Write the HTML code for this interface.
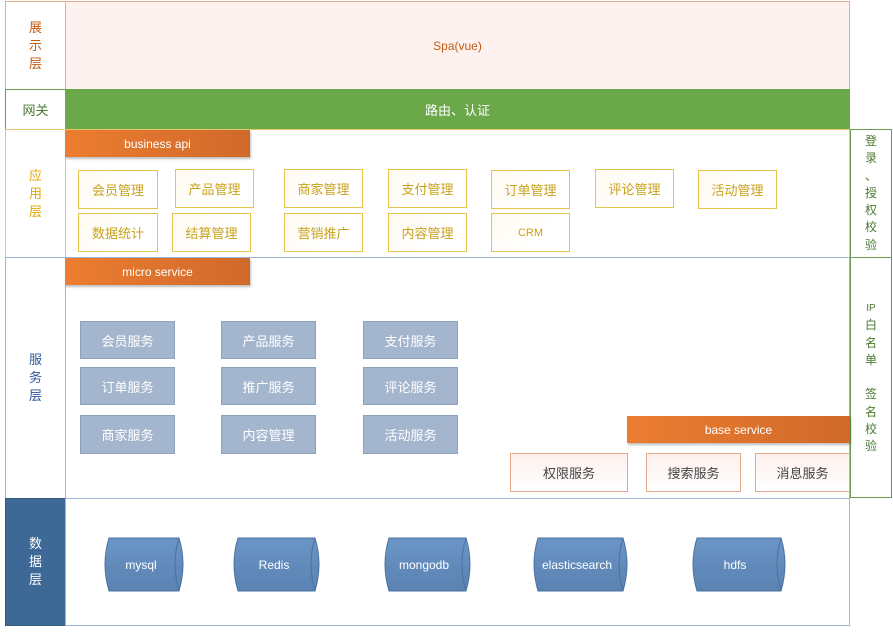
<!DOCTYPE html>
<html><head><meta charset="utf-8"><style>
*{margin:0;padding:0;box-sizing:border-box}
body{width:893px;height:633px;background:#fff;position:relative;font-family:"Liberation Sans","Noto Sans CJK SC",sans-serif;overflow:hidden}
div{position:absolute}
.c{display:flex;align-items:center;justify-content:center;text-align:center}
.lbl{font-size:13px;line-height:18px}
.ob{background:linear-gradient(90deg,#ec7d31,#d0692a);color:#fff;font-size:12px;box-shadow:1px 2px 2px rgba(0,0,0,.25)}
.y{border:1.5px solid #e6c54e;color:#c9a21a;font-size:13px;background:linear-gradient(135deg,#fffaf0,#fff 60%)}
.s{background:#a4b6cd;border:1px solid #8ca3c0;color:#fff;font-size:13px}
.b{border:1.5px solid #e5a88a;color:#444;font-size:13px;background:linear-gradient(180deg,#fdf0ec,#fff)}
.rc{text-align:center;color:#4a7a30;font-size:12px;line-height:17.3px}
</style></head><body>
<!-- row1 -->
<div class="c lbl" style="left:5px;top:1px;width:61px;height:89px;border:1px solid #e8a98c;color:#c55a11">展<br>示<br>层</div>
<div class="c" style="left:65px;top:1px;width:785px;height:89px;border:1px solid #e8a98c;background:#fdf2ef;color:#c55a11;font-size:12px">Spa(vue)</div>
<!-- row2 -->
<div class="c" style="left:5px;top:89px;width:61px;height:41px;border:1px solid #6a9a4f;color:#4a7a30;font-size:13px">网关</div>
<div class="c" style="left:65px;top:89px;width:785px;height:40px;background:#6aa84a;color:#fff;font-size:13px">路由、认证</div>
<!-- row3 -->
<div class="c lbl" style="left:5px;top:129px;width:61px;height:129px;border:1px solid #e6c86a;color:#e0a800">应<br>用<br>层</div>
<div style="left:65px;top:129px;width:785px;height:129px;border:1px solid #e6c86a"></div>
<div class="c ob" style="left:65px;top:130px;width:185px;height:27px">business api</div>
<div class="c y" style="left:78px;top:170px;width:80px;height:39px">会员管理</div>
<div class="c y" style="left:175px;top:169px;width:79px;height:39px">产品管理</div>
<div class="c y" style="left:284px;top:169px;width:79px;height:39px">商家管理</div>
<div class="c y" style="left:388px;top:169px;width:79px;height:39px">支付管理</div>
<div class="c y" style="left:491px;top:170px;width:79px;height:39px">订单管理</div>
<div class="c y" style="left:595px;top:169px;width:79px;height:39px">评论管理</div>
<div class="c y" style="left:698px;top:170px;width:79px;height:39px">活动管理</div>
<div class="c y" style="left:78px;top:213px;width:80px;height:39px">数据统计</div>
<div class="c y" style="left:172px;top:213px;width:79px;height:39px">结算管理</div>
<div class="c y" style="left:284px;top:213px;width:79px;height:39px">营销推广</div>
<div class="c y" style="left:388px;top:213px;width:79px;height:39px">内容管理</div>
<div class="c y" style="left:491px;top:213px;width:79px;height:39px;font-size:11px">CRM</div>
<!-- right col -->
<div class="rc" style="left:850px;top:129px;width:42px;height:129px;border:1px solid #6a9a4f;padding-top:3px">登<br>录<br>、<br>授<br>权<br>校<br>验</div>
<div class="rc" style="left:850px;top:257px;width:42px;height:241px;border:1px solid #6a9a4f;padding-top:41px"><span style="font-size:10px">IP</span><br>白<br>名<br>单<br><br>签<br>名<br>校<br>验</div>
<!-- row4 -->
<div class="c lbl" style="left:5px;top:257px;width:61px;height:242px;border:1px solid #9db4d6;color:#2f5597">服<br>务<br>层</div>
<div style="left:65px;top:257px;width:785px;height:242px;border:1px solid #9db4d6"></div>
<div class="c ob" style="left:65px;top:258px;width:185px;height:27px">micro service</div>
<div class="c s" style="left:80px;top:321px;width:95px;height:38px">会员服务</div>
<div class="c s" style="left:221px;top:321px;width:95px;height:38px">产品服务</div>
<div class="c s" style="left:363px;top:321px;width:95px;height:38px">支付服务</div>
<div class="c s" style="left:80px;top:367px;width:95px;height:38px">订单服务</div>
<div class="c s" style="left:221px;top:367px;width:95px;height:38px">推广服务</div>
<div class="c s" style="left:363px;top:367px;width:95px;height:38px">评论服务</div>
<div class="c s" style="left:80px;top:415px;width:95px;height:39px">商家服务</div>
<div class="c s" style="left:221px;top:415px;width:95px;height:39px">内容管理</div>
<div class="c s" style="left:363px;top:415px;width:95px;height:39px">活动服务</div>
<div class="c ob" style="left:627px;top:416px;width:223px;height:27px">base service</div>
<div class="c b" style="left:510px;top:453px;width:118px;height:39px">权限服务</div>
<div class="c b" style="left:646px;top:453px;width:95px;height:39px">搜索服务</div>
<div class="c b" style="left:755px;top:453px;width:95px;height:39px">消息服务</div>
<!-- row5 -->
<div class="c lbl" style="left:5px;top:498px;width:61px;height:128px;background:#3e6896;color:#fff;border:1px solid #34597f">数<br>据<br>层</div>
<div style="left:65px;top:498px;width:785px;height:128px;border:1px solid #9db4d6"></div>
<svg style="position:absolute;left:0;top:0" width="893" height="633">
<defs><linearGradient id="g" x1="0" y1="0" x2="0" y2="1"><stop offset="0" stop-color="#6a95c6"/><stop offset="1" stop-color="#5a82b2"/></linearGradient></defs>
<g stroke="#4a72a0" stroke-width="1" fill="url(#g)">
<path d="M109 538 H179 Q187 564 179 591 H109 Q101 564 109 538Z"/><path d="M179 538 Q171 564 179 591" fill="none"/>
<path d="M238 538 H315 Q323 564 315 591 H238 Q230 564 238 538Z"/><path d="M315 538 Q307 564 315 591" fill="none"/>
<path d="M389 538 H466 Q474 564 466 591 H389 Q381 564 389 538Z"/><path d="M466 538 Q458 564 466 591" fill="none"/>
<path d="M538 538 H623 Q631 564 623 591 H538 Q530 564 538 538Z"/><path d="M623 538 Q615 564 623 591" fill="none"/>
<path d="M697 538 H781 Q789 564 781 591 H697 Q689 564 697 538Z"/><path d="M781 538 Q773 564 781 591" fill="none"/>
</g>
<g fill="#fff" font-size="12" font-family="Liberation Sans,sans-serif" text-anchor="middle">
<text x="141" y="569">mysql</text><text x="274" y="569">Redis</text><text x="424" y="569">mongodb</text><text x="577" y="569">elasticsearch</text><text x="735" y="569">hdfs</text>
</g></svg>
</body></html>
